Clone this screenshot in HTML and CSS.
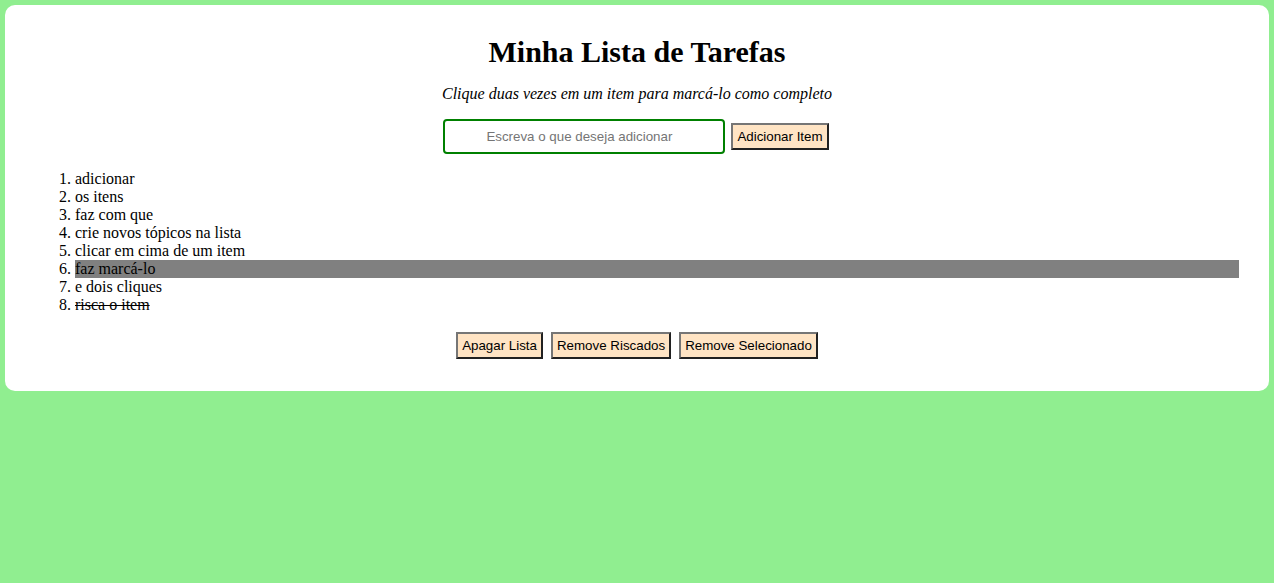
FILE: index.html
```html
<!DOCTYPE html>
<html lang="pt">
<head>
<meta charset="utf-8">
<title>Minha Lista de Tarefas</title>
<link rel="stylesheet" href="styles.css">
</head>
<body>
<div class="container">
  <h1 class="title">Minha Lista de Tarefas</h1>
  <p class="subtitle">Clique duas vezes em um item para marcá-lo como completo</p>
  <div class="add-row">
    <input class="item-input" type="text" placeholder="Escreva o que deseja adicionar">
    <button class="btn">Adicionar Item</button>
  </div>
  <ol class="todo-list">
    <li>adicionar</li>
    <li>os itens</li>
    <li>faz com que</li>
    <li>crie novos tópicos na lista</li>
    <li>clicar em cima de um item</li>
    <li class="selected">faz marcá-lo</li>
    <li>e dois cliques</li>
    <li class="done">risca o item</li>
  </ol>
  <div class="actions">
    <button class="btn">Apagar Lista</button>
    <button class="btn">Remove Riscados</button>
    <button class="btn">Remove Selecionado</button>
  </div>
</div>
</body>
</html>
```
FILE: styles.css
```css
html, body {
  margin: 0;
  padding: 0;
}
body {
  background: #90ee90;
  font-family: "Liberation Serif", "Times New Roman", serif;
  font-size: 16px;
  padding: 5px;
}
.container {
  background: #fff;
  border-radius: 10px;
  padding: 6px 30px 32px;
}
.title {
  text-align: center;
  font-size: 30px;
  margin: 24px 0 0;
}
.subtitle {
  text-align: center;
  font-style: italic;
  margin: 16px 0 16px;
}
.add-row {
  display: flex;
  justify-content: center;
  align-items: center;
  gap: 6px;
  padding-right: 2px;
}
.item-input {
  width: 282px;
  height: 35px;
  box-sizing: border-box;
  border: 2px solid green;
  border-radius: 4px;
  text-align: center;
  font-family: "Liberation Sans", Arial, sans-serif;
  font-size: 13.333px;
  padding: 1px 12px 1px 2px;
  outline: none;
}
.btn {
  background-color: bisque;
  font-family: "Liberation Sans", Arial, sans-serif;
  font-size: 13.333px;
  color: #000;
  padding: 4px 4px;
  border: 2px outset #767676;
}
.todo-list {
  margin: 16px 0 18px;
  padding-left: 40px;
}
.todo-list li {
  line-height: 18px;
}
.selected {
  background: gray;
}
.done {
  text-decoration: line-through;
}
.actions {
  display: flex;
  justify-content: center;
  gap: 8px;
}
```
